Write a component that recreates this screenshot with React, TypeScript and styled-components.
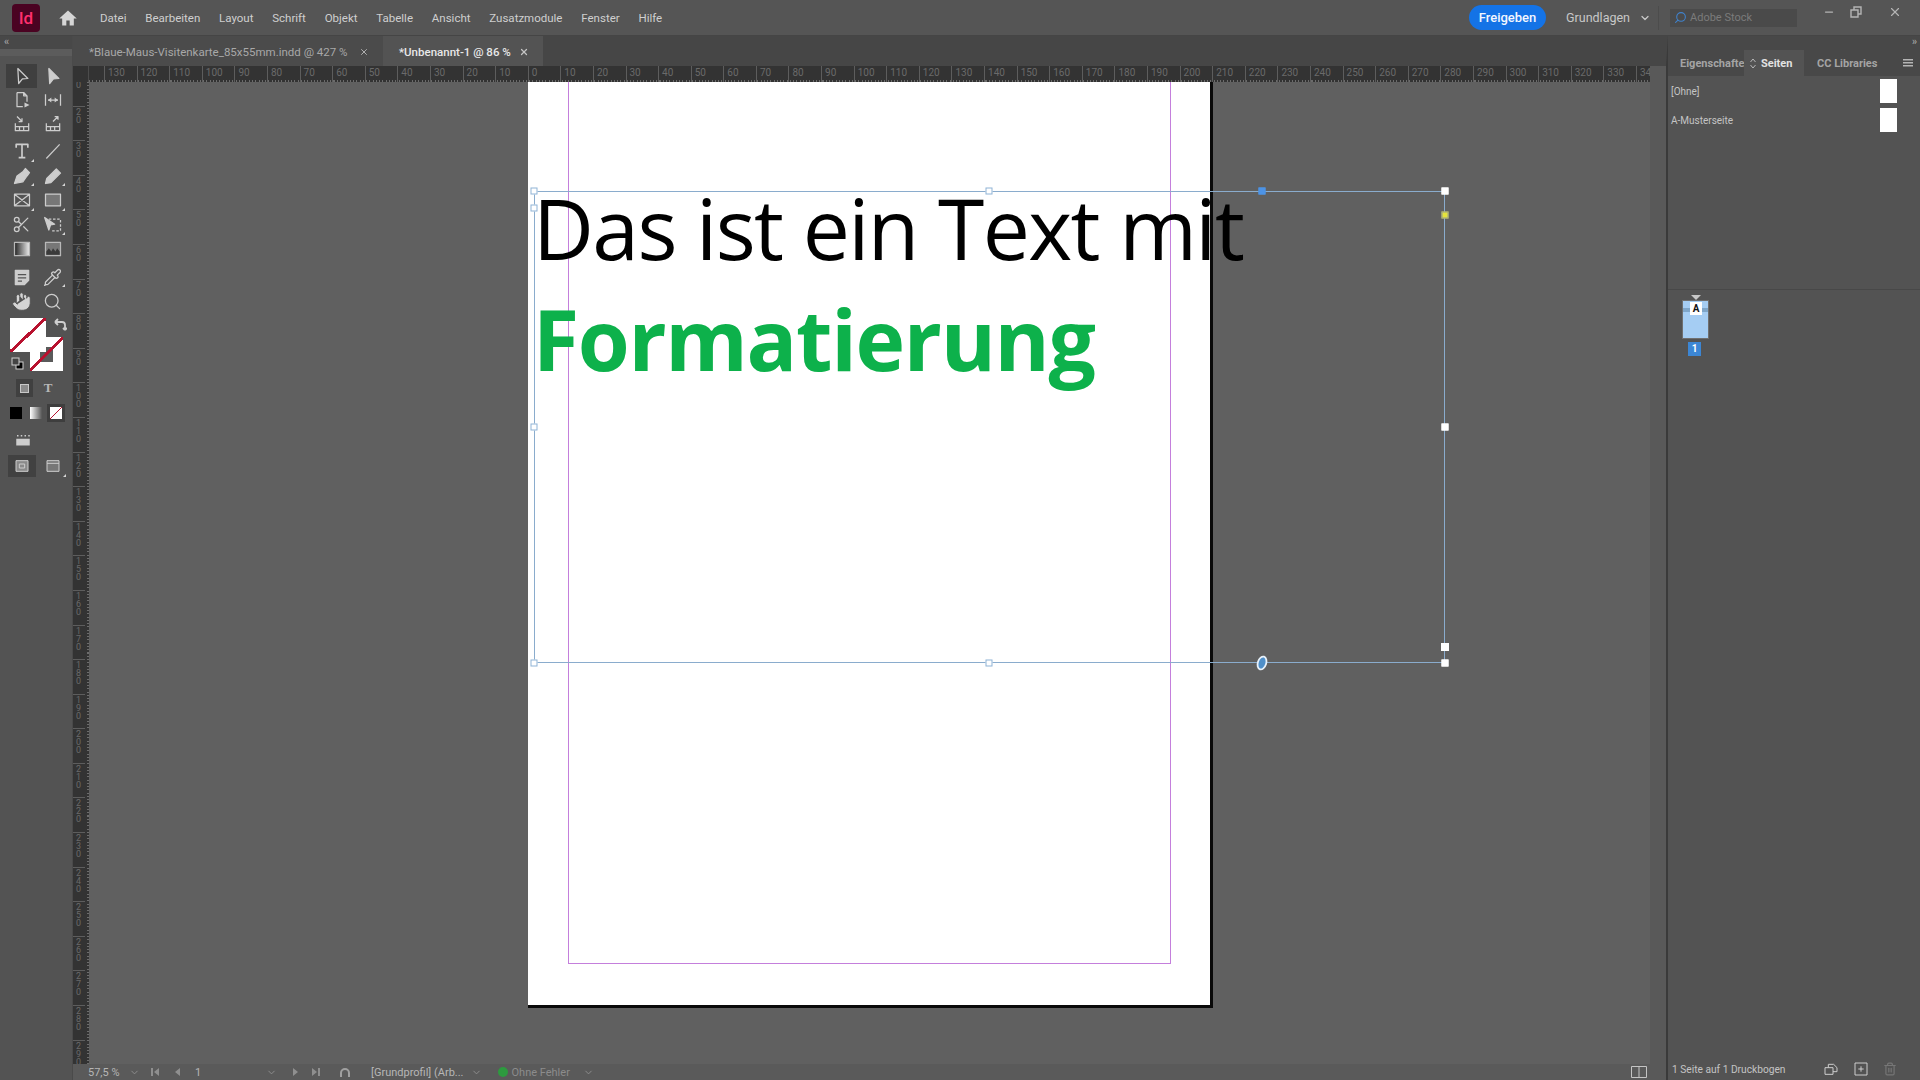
import React from "react";
import styled, { createGlobalStyle } from "styled-components";
import { ChevronDown, Hand, Minus, Pipette, Scissors, Search, Trash2, X } from "lucide-react";

const GlobalStyle = createGlobalStyle`
  html, body { margin: 0; padding: 0; background: #535353; }
  * { box-sizing: border-box; }
`;

const Shell = styled.div`
  width: 1920px;
  height: 1080px;
  display: flex;
  flex-direction: column;
  overflow: hidden;
  background: #535353;
  color: #c8c8c8;
  font-family: Roboto, "Liberation Sans", sans-serif;
  font-size: 12px;
`;

/* top bar */
const TopBar = styled.header`
  height: 36px;
  flex: none;
  display: flex;
  align-items: center;
  background: #555555;
  border-bottom: 1px solid #454545;
`;

const Logo = styled.div`
  width: 28px;
  height: 28px;
  margin-left: 12px;
  border-radius: 4px;
  background: #4a0322;
  color: #ff2f6e;
  font-size: 17px;
  font-weight: 500;
  display: flex;
  align-items: center;
  justify-content: center;
`;

const HomeIcon = styled.svg`
  width: 20px;
  height: 20px;
  margin-left: 18px;
  fill: #d6d6d6;
`;

const Menu = styled.nav`
  display: flex;
  gap: 18.8px;
  margin-left: 22px;
`;

const MenuItem = styled.span`
  color: #cfcfcf;
  font-size: 11.5px;
`;

const TopRight = styled.div`
  margin-left: auto;
  display: flex;
  align-items: center;
  height: 100%;
`;

const ShareButton = styled.div`
  width: 77px;
  height: 25px;
  border-radius: 13px;
  background: #1473e6;
  color: #f2f7ff;
  font-size: 13px;
  font-weight: 500;
  display: flex;
  align-items: center;
  justify-content: center;
`;

const Workspace = styled.div`
  width: 92px;
  margin-left: 20px;
  height: 100%;
  display: flex;
  align-items: center;
  gap: 9px;
  color: #c8c8c8;
  font-size: 12.5px;
  white-space: nowrap;
`;

const TopDivider = styled.i`
  width: 1px;
  height: 24px;
  margin: 0 11px 0 0;
  background: #4c4c4c;
`;

const StockSearch = styled.div`
  width: 127px;
  height: 18px;
  background: #4a4a4a;
  display: flex;
  align-items: center;
  gap: 3px;
  padding-left: 4px;
  color: #7b7b7b;
  font-size: 11px;
`;

const StockIcon = styled(Search)`
  transform: scaleX(-1);
  color: #3f82cc;
`;

const WindowButtons = styled.div`
  width: 123px;
  height: 100%;
  display: flex;
  align-items: flex-start;
  padding: 4px 0 0 26px;
  color: #b4b4b4;
`;

const WindowButton = styled.span<{ $w: number }>`
  width: ${(p) => p.$w}px;
  height: 16px;
  display: flex;
  align-items: center;
`;

const RestoreIcon = styled.svg`
  width: 12px;
  height: 12px;
  fill: none;
  stroke: #b4b4b4;
  stroke-width: 1.4;
`;

/* main area */
const Body = styled.div`
  flex: 1;
  min-height: 0;
  display: flex;
`;

/* tool panel */
const ToolPanel = styled.aside`
  width: 73px;
  flex: none;
  background: #535353;
  display: flex;
  flex-direction: column;
  border-right: 1px solid #4a4a4a;
`;

const PanelCap = styled.div<{ $right?: boolean }>`
  height: ${(p) => (p.$right ? 14 : 13)}px;
  flex: none;
  background: #484848;
  color: #b0b0b0;
  font-size: 10px;
  line-height: 11px;
  padding: 0 4px;
  letter-spacing: -1px;
  text-align: ${(p) => (p.$right ? "right" : "left")};
`;

const Grip = styled.div`
  height: 14px;
  flex: none;
  background: linear-gradient(#5c5c5c 0 7px, transparent 7px);
`;

const ToolGrid = styled.div<{ $row: number; $top: number }>`
  display: grid;
  grid-template-columns: 31px 31px;
  grid-auto-rows: ${(p) => p.$row}px;
  padding-left: 6px;
  margin-top: ${(p) => p.$top}px;
`;

const Tool = styled.div<{ $active?: boolean; $flyout?: boolean }>`
  position: relative;
  display: flex;
  align-items: center;
  justify-content: center;
  color: #cdcdcd;
  background: ${(p) => (p.$active ? "#3f3f3f" : "transparent")};
  ${(p) =>
    p.$flyout
      ? `&::after {
          content: "";
          position: absolute;
          right: 3px;
          bottom: 2px;
          border-left: 3px solid transparent;
          border-bottom: 3px solid #d6d6d6;
        }`
      : ""}
`;

const Glyph = styled.svg`
  width: 20px;
  height: 20px;
  fill: none;
  stroke: #cdcdcd;
  stroke-width: 1.5;
  stroke-linejoin: round;
`;

const SwatchStack = styled.div`
  position: relative;
  height: 60px;
  margin-top: 3px;
  flex: none;
`;

const noneFill = `linear-gradient(to bottom right, transparent 47%, #b8122f 47%, #b8122f 53%, transparent 53%)`;

const FillSwatch = styled.div`
  position: absolute;
  left: 10px;
  top: 2px;
  width: 36px;
  height: 34px;
  z-index: 2;
  background: ${noneFill}, #ffffff;
`;

const StrokeSwatch = styled.div`
  position: absolute;
  left: 30px;
  top: 21px;
  width: 33px;
  height: 34px;
  background: ${noneFill}, linear-gradient(#5a5a5a, #5a5a5a) center / 13px 15px no-repeat, #ffffff;
`;

const SwapIcon = styled.svg`
  position: absolute;
  left: 54px;
  top: 2px;
  width: 13px;
  height: 14px;
  fill: none;
  stroke: #cfcfcf;
  stroke-width: 1.8;
`;

const DefaultsIcon = styled.svg`
  position: absolute;
  left: 11px;
  top: 41px;
  width: 13px;
  height: 13px;
`;

const ModeRow = styled.div<{ $top: number; $left?: number }>`
  display: flex;
  align-items: center;
  height: 18px;
  margin-top: ${(p) => p.$top}px;
  padding-left: ${(p) => p.$left ?? 0}px;
`;

const FormatButton = styled.div<{ $on?: boolean; $w: number }>`
  width: ${(p) => p.$w}px;
  height: 18px;
  display: flex;
  align-items: center;
  justify-content: center;
  background: ${(p) => (p.$on ? "#404040" : "transparent")};
  color: #b8b8b8;
  font-family: "Liberation Serif", serif;
  font-size: 13px;
  font-weight: 700;
`;

const TinySquare = styled.i`
  width: 9px;
  height: 9px;
  background: #8b8b8b;
  border: 1px solid #c8c8c8;
`;

const ColorChip = styled.i<{ $bg: string; $on?: boolean; $first?: boolean }>`
  width: 12px;
  height: 12px;
  margin-left: ${(p) => (p.$first ? 10 : 8)}px;
  background: ${(p) => p.$bg};
  outline: ${(p) => (p.$on ? "3px solid #3e3e3e" : "none")};
`;

const RowIcon = styled(Glyph)`
  width: 18px;
  height: 18px;
`;

const ScreenRow = styled.div`
  display: flex;
  align-items: center;
  height: 22px;
  margin: 5px 0 0 8px;
`;

const ScreenButton = styled.div<{ $on?: boolean; $flyout?: boolean }>`
  position: relative;
  width: 28px;
  height: 22px;
  margin-right: ${(p) => (p.$on ? "3px" : "0")};
  background: ${(p) => (p.$on ? "#414141" : "transparent")};
  display: flex;
  align-items: center;
  justify-content: center;
  ${(p) =>
    p.$flyout
      ? `&::after {
          content: "";
          position: absolute;
          right: 1px;
          bottom: 0;
          border-left: 3px solid transparent;
          border-bottom: 3px solid #d6d6d6;
        }`
      : ""}
`;

const SmallGlyph = styled(Glyph)`
  width: 16px;
  height: 16px;
`;

/* document area */
const Document = styled.main`
  width: 1577px;
  flex: none;
  display: flex;
  flex-direction: column;
`;

const TabStrip = styled.div`
  height: 30px;
  flex: none;
  display: flex;
  background: #464646;
`;

const Tab = styled.div<{ $active?: boolean; $w: number }>`
  width: ${(p) => p.$w}px;
  display: flex;
  align-items: center;
  padding: 2px 0 0 ${(p) => (p.$active ? 16 : 16)}px;
  background: ${(p) => (p.$active ? "#535353" : "#4b4b4b")};
  color: ${(p) => (p.$active ? "#e8e8e8" : "#a8a8a8")};
  font-size: 11.5px;
  font-weight: ${(p) => (p.$active ? 500 : 400)};
  white-space: nowrap;
`;

const TabClose = styled.span`
  display: flex;
  margin-left: auto;
  margin-right: 14px;
  color: #c4c4c4;
`;

const RulerRow = styled.div`
  height: 16px;
  flex: none;
  display: flex;
  background: #333333;
`;

const RulerCorner = styled.div`
  width: 16px;
  flex: none;
  border-right: 1px solid #4c4c4c;
`;

const HorizontalRuler = styled.div`
  flex: 1;
  min-width: 0;
  display: flex;
  overflow: hidden;
  padding-left: 15px;
  background: repeating-linear-gradient(90deg, #6c6c6c 0 1px, transparent 1px 3.26px) left bottom / 100% 2px no-repeat;
`;

const RulerTick = styled.span`
  width: 32.6px;
  flex: none;
  padding: 1px 0 0 3px;
  border-left: 1px solid #5d5d5d;
  color: #6a6a6a;
  font-size: 10px;
  line-height: 11px;
`;

const CanvasRow = styled.div`
  flex: 1;
  min-height: 0;
  display: flex;
`;

const VerticalRuler = styled.div`
  width: 16px;
  flex: none;
  overflow: hidden;
  background: #333333 repeating-linear-gradient(180deg, #6c6c6c 0 1px, transparent 1px 3.26px) right top / 2px 100% no-repeat;
`;

const VerticalTicks = styled.div`
  margin-top: -11px;
`;

const VerticalTick = styled.span`
  display: block;
  height: 32.6px;
  padding: 1px 0 0 3px;
  border-top: 1px solid #5d5d5d;
  color: #6a6a6a;
  font-size: 9px;
  line-height: 8px;
  width: 9px;
  white-space: normal;
  word-break: break-all;
  box-sizing: content-box;
`;

const Canvas = styled.div`
  flex: 1;
  min-width: 0;
  position: relative;
  background: #606060;
  padding-left: 439px;
`;

const Page = styled.div`
  position: relative;
  width: 685px;
  height: 926px;
  background: #ffffff;
  border-right: 3px solid #0a0a0a;
  border-bottom: 3px solid #0a0a0a;
`;

const MarginGuide = styled.div`
  position: absolute;
  left: 40px;
  top: 0;
  width: 603px;
  height: 882px;
  border: 1px solid #c47fdc;
  border-top: 0;
`;

const TextFrame = styled.div`
  position: absolute;
  left: 6px;
  top: 109px;
  width: 911px;
  height: 472px;
  border: 1px solid #8aaccd;
  font-family: "Open Sans", "Noto Sans", sans-serif;
  z-index: 2;
`;

const HeadLine = styled.div`
  height: 111px;
  margin: -8px 0 0 -2px;
  color: #000000;
  font-size: 84px;
  line-height: 88px;
  letter-spacing: -1.6px;
  white-space: nowrap;
`;

const GreenLine = styled.div`
  margin-left: -2px;
  color: #0db14b;
  font-size: 84px;
  line-height: 88px;
  font-weight: 700;
  letter-spacing: -1.3px;
  white-space: nowrap;
`;

const Handle = styled.i<{ $x: number; $y: number; $size?: number; $bg?: string; $line?: string }>`
  position: absolute;
  z-index: 3;
  left: ${(p) => p.$x}px;
  top: ${(p) => p.$y}px;
  width: ${(p) => p.$size ?? 7}px;
  height: ${(p) => p.$size ?? 7}px;
  transform: translate(-50%, -50%);
  background: ${(p) => p.$bg ?? "#ffffff"};
  border: 1px solid ${(p) => p.$line ?? "#8fb3d6"};
`;

const ThreadMark = styled.svg`
  position: absolute;
  z-index: 3;
  left: 734px;
  top: 581px;
  width: 14px;
  height: 16px;
  transform: translate(-50%, -50%);
`;

const StatusBar = styled.footer`
  height: 16px;
  flex: none;
  display: flex;
  align-items: center;
  background: #5a5a5a;
  color: #b0b0b0;
  font-size: 11px;
`;

const StatusText = styled.span<{ $w: number; $pad?: number; $dim?: boolean }>`
  flex: none;
  width: ${(p) => p.$w}px;
  padding-left: ${(p) => p.$pad ?? 0}px;
  color: ${(p) => (p.$dim ? "#8c8c8c" : "#b6b6b6")};
  white-space: nowrap;
  overflow: hidden;
  display: flex;
  align-items: center;
`;

const NavGlyph = styled.svg<{ $w: number }>`
  flex: none;
  width: ${(p) => p.$w}px;
  height: 10px;
  fill: #8f8f8f;
`;

const GreenDot = styled.i`
  width: 10px;
  height: 10px;
  border-radius: 50%;
  margin-right: 4px;
  flex: none;
  background: #2d9a3f;
`;

const LayoutToggle = styled.svg`
  margin-left: auto;
  margin-right: 3px;
  width: 16px;
  height: 12px;
  fill: none;
  stroke: #c4c4c4;
`;

const ScrollStrip = styled.div`
  width: 18px;
  flex: none;
  background: #595959;
  border-top: 30px solid #464646;
  border-right: 2px solid #3a3a3a;
`;

/* right panel */
const SidePanel = styled.aside`
  flex: 1;
  min-width: 0;
  display: flex;
  flex-direction: column;
  background: #535353;
`;

const PanelTabs = styled.div`
  height: 26px;
  flex: none;
  display: flex;
  align-items: center;
  background: #484848;
  padding-left: 12px;
  font-size: 11px;
  font-weight: 700;
  color: #a4a4a4;
`;

const PanelTab = styled.div<{ $active?: boolean; $w: number; $pad?: number }>`
  width: ${(p) => p.$w}px;
  height: 100%;
  flex: none;
  display: flex;
  align-items: center;
  gap: 5px;
  overflow: hidden;
  white-space: nowrap;
  padding-left: ${(p) => p.$pad ?? 0}px;
  background: ${(p) => (p.$active ? "#535353" : "transparent")};
  color: ${(p) => (p.$active ? "#e2e2e2" : "#a4a4a4")};
`;

const SortIcon = styled.svg`
  width: 6px;
  height: 11px;
  flex: none;
  fill: none;
  stroke: #b8b8b8;
`;

const BurgerIcon = styled.svg`
  margin-left: auto;
  margin-right: 7px;
  width: 10px;
  height: 8px;
  fill: #b4b4b4;
`;

const MasterList = styled.div`
  height: 214px;
  flex: none;
  padding: 3px 23px 0 3px;
  border-bottom: 1px solid #484848;
  display: flex;
  flex-direction: column;
  gap: 5px;
`;

const MasterRow = styled.div`
  height: 24px;
  display: flex;
  align-items: center;
  justify-content: space-between;
  color: #c4c4c4;
  font-size: 10px;
`;

const MasterThumb = styled.i`
  width: 17px;
  height: 24px;
  background: #ffffff;
`;

const PageList = styled.div`
  padding: 5px 0 0 15px;
  display: flex;
  flex-direction: column;
`;

const MasterCaret = styled.i`
  width: 0;
  height: 0;
  margin-left: 8px;
  border-left: 5px solid transparent;
  border-right: 5px solid transparent;
  border-top: 5px solid #c8c8c8;
`;

const PageThumb = styled.div`
  position: relative;
  width: 25px;
  height: 37px;
  margin-top: 1px;
  background: linear-gradient(transparent 7px, #7fa6c9 7px, #7fa6c9 11px, transparent 11px), #a5cdf3;
  outline: 1px solid #6f6f6f;
`;

const MasterTag = styled.span`
  position: absolute;
  left: 7px;
  top: 1px;
  width: 12px;
  height: 13px;
  background: #ffffff;
  color: #111111;
  font-size: 10px;
  font-weight: 700;
  line-height: 13px;
  text-align: center;
`;

const PageBadge = styled.div`
  width: 13px;
  height: 14px;
  margin: 4px 0 0 5px;
  background: #3c86d4;
  color: #ffffff;
  font-size: 10px;
  font-weight: 700;
  line-height: 14px;
  text-align: center;
`;

const PanelFooter = styled.div`
  margin-top: auto;
  height: 22px;
  flex: none;
  display: flex;
  align-items: center;
  padding-left: 4px;
  color: #c4c4c4;
  font-size: 10.2px;
`;

const FooterIcons = styled.div`
  margin-left: auto;
  margin-right: 23px;
  display: flex;
  align-items: center;
  gap: 14px;
`;

const menus = ["Datei", "Bearbeiten", "Layout", "Schrift", "Objekt", "Tabelle", "Ansicht", "Zusatzmodule", "Fenster", "Hilfe"];

const hTicks = Array.from({ length: 48 }, (_, i) => Math.abs(-130 + i * 10));
const vTicks = Array.from({ length: 30 }, (_, i) => (i + 1) * 10);

const Tools = {
  select: <Glyph viewBox="0 0 24 24"><path d="M7 3l12 12-6.5 0.5L8 21z" /></Glyph>,
  direct: <Glyph viewBox="0 0 24 24"><path d="M7 3l12 12-6.5 0.5L8 21z" fill="#cdcdcd" /></Glyph>,
  page: <Glyph viewBox="0 0 24 24"><path d="M6 3h8l4 4v7M6 3v17h7M14 3v4h4" /><path d="M15 15l6 3-6 3z" fill="#cdcdcd" stroke="none" /></Glyph>,
  gap: <Glyph viewBox="0 0 24 24"><path d="M3 5v14M21 5v14M6 12h12" /><path d="M6 12l4-3v6zM18 12l-4-3v6z" fill="#cdcdcd" stroke="none" /></Glyph>,
  collect: <Glyph viewBox="0 0 24 24"><path d="M4 11v9h16v-9M4 15h16M9 15v5M14 15v5" /><path d="M6 3l6 6M8 9h4V5" /></Glyph>,
  place: <Glyph viewBox="0 0 24 24"><path d="M4 11v9h16v-9M4 15h16M9 15v5M14 15v5" /><path d="M12 9l6-6M14 3h4v4" /></Glyph>,
  type: <Glyph viewBox="0 0 24 24"><path d="M5 8V4h14v4M12 4v16M8 20h8" strokeWidth="2" /></Glyph>,
  line: <Glyph viewBox="0 0 24 24"><path d="M4 21L20 4" /></Glyph>,
  pen: <Glyph viewBox="0 0 24 24"><path d="M3 21l3-9 7-5 5 5-5 7zM3 21l6-6M13 7l3-4 5 5-3 4" fill="#cdcdcd" /></Glyph>,
  pencil: <Glyph viewBox="0 0 24 24"><path d="M3 21l1.500-6L16 3.500l5 5L9.500 20z" fill="#cdcdcd" /></Glyph>,
  frame: <Glyph viewBox="0 0 24 24"><path d="M3 5h18v14H3zM3 5l18 14M21 5L3 19" /></Glyph>,
  rect: <Glyph viewBox="0 0 24 24"><path d="M3 5h18v14H3z" fill="#777777" /></Glyph>,
  transform: <Glyph viewBox="0 0 24 24"><path d="M7 5h14v14H11" strokeDasharray="3 2" /><path d="M2 3l12 8-5 1-2 6z" fill="#cdcdcd" /></Glyph>,
  gradient: (
    <Glyph viewBox="0 0 24 24">
      <defs>
        <linearGradient id="gradTool">
          <stop offset="0" stopColor="#222222" />
          <stop offset="1" stopColor="#eeeeee" />
        </linearGradient>
      </defs>
      <path d="M3 4h18v16H3z" fill="url(#gradTool)" stroke="#b8b8b8" />
    </Glyph>
  ),
  feather: (
    <Glyph viewBox="0 0 24 24">
      <path d="M3 4h18v16H3z" fill="#777777" stroke="#b8b8b8" />
      <path d="M4 15l3-4 3 4 2-4 3 4 2-4 3 4v4H4z" fill="#3a3a3a" stroke="none" />
    </Glyph>
  ),
  note: <Glyph viewBox="0 0 24 24"><path d="M4 4h16v12l-5 5H4z" fill="#cdcdcd" /><path d="M7 9h10M7 13h10M7 17h5" stroke="#555555" /></Glyph>,
};

function ToolCell({ children, active, flyout }: { children: React.ReactNode; active?: boolean; flyout?: boolean }) {
  return (
    <Tool $active={active} $flyout={flyout}>
      {children}
    </Tool>
  );
}

function ToolColumn() {
  return (
    <ToolPanel>
      <PanelCap>‹‹</PanelCap>
      <Grip />
      <ToolGrid $row={24} $top={1}>
        <ToolCell active>{Tools.select}</ToolCell>
        <ToolCell>{Tools.direct}</ToolCell>
        <ToolCell>{Tools.page}</ToolCell>
        <ToolCell>{Tools.gap}</ToolCell>
        <ToolCell>{Tools.collect}</ToolCell>
        <ToolCell>{Tools.place}</ToolCell>
      </ToolGrid>
      <ToolGrid $row={24.5} $top={3}>
        <ToolCell flyout>{Tools.type}</ToolCell>
        <ToolCell>{Tools.line}</ToolCell>
        <ToolCell flyout>{Tools.pen}</ToolCell>
        <ToolCell flyout>{Tools.pencil}</ToolCell>
        <ToolCell flyout>{Tools.frame}</ToolCell>
        <ToolCell flyout>{Tools.rect}</ToolCell>
        <ToolCell><Scissors size={19} strokeWidth={1.6} /></ToolCell>
        <ToolCell flyout>{Tools.transform}</ToolCell>
        <ToolCell>{Tools.gradient}</ToolCell>
        <ToolCell>{Tools.feather}</ToolCell>
      </ToolGrid>
      <ToolGrid $row={24} $top={3.5}>
        <ToolCell>{Tools.note}</ToolCell>
        <ToolCell flyout><Pipette size={19} strokeWidth={1.6} /></ToolCell>
        <ToolCell><Hand size={21} strokeWidth={1.1} fill="#d4d4d4" color="#535353" /></ToolCell>
        <ToolCell><Search size={19} strokeWidth={1.6} /></ToolCell>
      </ToolGrid>
      <SwatchStack>
        <FillSwatch />
        <StrokeSwatch />
        <SwapIcon viewBox="0 0 13 14"><path d="M2 4h6a3 3 0 0 1 3 3v5M1 4l3-3M1 4l3 3M11 12l-2-2M11 12l2-2" /></SwapIcon>
        <DefaultsIcon viewBox="0 0 13 13">
          <rect x="5" y="5" width="7" height="7" fill="#000000" stroke="#d0d0d0" />
          <rect x="1" y="1" width="7" height="7" fill="#444444" stroke="#d0d0d0" />
        </DefaultsIcon>
      </SwatchStack>
      <ModeRow $top={3} $left={16}>
        <FormatButton $on $w={17}><TinySquare /></FormatButton>
        <FormatButton $w={30}>T</FormatButton>
      </ModeRow>
      <ModeRow $top={7}>
        <ColorChip $first $bg="#000000" />
        <ColorChip $bg="linear-gradient(90deg,#ffffff,#555555)" />
        <ColorChip $on $bg={`${noneFill}, #ffffff`} />
      </ModeRow>
      <ModeRow $top={10} $left={14}>
        <RowIcon viewBox="0 0 24 24">
          <path d="M3 9h18v9H3z" fill="#cdcdcd" stroke="none" />
          <path d="M4 5h2M9 5h2M14 5h2M19 5h2" strokeWidth="2" />
        </RowIcon>
      </ModeRow>
      <ScreenRow>
        <ScreenButton $on>
          <SmallGlyph viewBox="0 0 24 24"><path d="M3 4h18v16H3zM8 9h8v6H8z" fill="#8a8a8a" /></SmallGlyph>
        </ScreenButton>
        <ScreenButton $flyout>
          <SmallGlyph viewBox="0 0 24 24"><path d="M3 4h18v16H3zM3 8h18" fill="#777777" /></SmallGlyph>
        </ScreenButton>
      </ScreenRow>
    </ToolPanel>
  );
}

function DocumentPage() {
  return (
    <Page>
      <MarginGuide />
      <TextFrame>
        <HeadLine>Das ist ein Text mit</HeadLine>
        <GreenLine>Formatierung</GreenLine>
      </TextFrame>
      <Handle $x={6} $y={109} />
      <Handle $x={461} $y={109} />
      <Handle $x={6} $y={126} />
      <Handle $x={6} $y={345} />
      <Handle $x={6} $y={581} />
      <Handle $x={461} $y={581} />
      <Handle $x={734} $y={109} $bg="#4d93e6" $line="#4d93e6" />
      <Handle $x={917} $y={109} $line="#ffffff" />
      <Handle $x={917} $y={133} $bg="#e4e33c" $line="#9aa08c" />
      <Handle $x={917} $y={345} $line="#ffffff" />
      <Handle $x={917} $y={565} $size={8} $line="#ffffff" />
      <Handle $x={917} $y={581} $line="#ffffff" />
      <ThreadMark viewBox="0 0 14 16">
        <ellipse cx="7" cy="8" rx="4.2" ry="6.6" transform="rotate(18 7 8)" fill="#4f8fc9" stroke="#e8f1fa" strokeWidth="1.8" />
      </ThreadMark>
    </Page>
  );
}

function StatusLine() {
  return (
    <StatusBar>
      <StatusText $w={56} $pad={15}>57,5 %</StatusText>
      <ChevronDown size={11} color="#8f8f8f" />
      <NavGlyph $w={30} viewBox="0 0 30 10"><path d="M11 1h2v8h-2zM14 5l5-4v8z" /></NavGlyph>
      <NavGlyph $w={14} viewBox="0 0 14 10"><path d="M5 5l5-4v8z" /></NavGlyph>
      <StatusText $w={82} $pad={11}>1</StatusText>
      <ChevronDown size={11} color="#8f8f8f" />
      <NavGlyph $w={30} viewBox="0 0 30 10"><path d="M16 1l5 4-5 4z" /></NavGlyph>
      <NavGlyph $w={20} viewBox="0 0 20 10"><path d="M5 1l5 4-5 4zM11 1h2v8h-2z" /></NavGlyph>
      <NavGlyph $w={36} viewBox="0 0 36 10"><path d="M14 10V6a4 4 0 0 1 8 0v4" fill="none" stroke="#a0a0a0" strokeWidth="2" /></NavGlyph>
      <StatusText $w={107.5} $pad={8}>[Grundprofil] (Arb...</StatusText>
      <ChevronDown size={11} color="#8f8f8f" />
      <StatusText $w={101} $pad={16} $dim>
        <GreenDot />
        Ohne Fehler
      </StatusText>
      <ChevronDown size={11} color="#8f8f8f" />
      <LayoutToggle viewBox="0 0 16 12"><path d="M.5.500h15v11H.5zM8 .500v11" /></LayoutToggle>
    </StatusBar>
  );
}

export default function App() {
  return (
    <Shell>
      <GlobalStyle />
      <TopBar>
        <Logo>Id</Logo>
        <HomeIcon viewBox="0 0 24 24"><path d="M12 3L1.500 12.500H5V21h5v-6h4v6h5v-8.500h3.500z" /></HomeIcon>
        <Menu>
          {menus.map((m) => (
            <MenuItem key={m}>{m}</MenuItem>
          ))}
        </Menu>
        <TopRight>
          <ShareButton>Freigeben</ShareButton>
          <Workspace>
            Grundlagen
            <ChevronDown size={12} strokeWidth={2.5} />
          </Workspace>
          <TopDivider />
          <StockSearch>
            <StockIcon size={13} />
            Adobe Stock
          </StockSearch>
          <WindowButtons>
            <WindowButton $w={27}><Minus size={12} strokeWidth={2.5} /></WindowButton>
            <WindowButton $w={38}>
              <RestoreIcon viewBox="0 0 12 12"><path d="M1 4h7v7H1zM4 4V1h7v7H8" /></RestoreIcon>
            </WindowButton>
            <WindowButton $w={14}><X size={14} /></WindowButton>
          </WindowButtons>
        </TopRight>
      </TopBar>
      <Body>
        <ToolColumn />
        <Document>
          <TabStrip>
            <Tab $w={310}>
              *Blaue-Maus-Visitenkarte_85x55mm.indd @ 427 %
              <TabClose><X size={10} /></TabClose>
            </Tab>
            <Tab $active $w={160}>
              *Unbenannt-1 @ 86 %
              <TabClose><X size={10} strokeWidth={3} /></TabClose>
            </Tab>
          </TabStrip>
          <RulerRow>
            <RulerCorner />
            <HorizontalRuler>
              {hTicks.map((t, i) => (
                <RulerTick key={i}>{t}</RulerTick>
              ))}
            </HorizontalRuler>
          </RulerRow>
          <CanvasRow>
            <VerticalRuler>
              <VerticalTicks>
                {vTicks.map((t) => (
                  <VerticalTick key={t}>{t}</VerticalTick>
                ))}
              </VerticalTicks>
            </VerticalRuler>
            <Canvas>
              <DocumentPage />
            </Canvas>
          </CanvasRow>
          <StatusLine />
        </Document>
        <ScrollStrip />
        <SidePanel>
          <PanelCap $right>››</PanelCap>
          <PanelTabs>
            <PanelTab $w={64}>Eigenschaften</PanelTab>
            <PanelTab $active $w={60} $pad={6}>
              <SortIcon viewBox="0 0 6 11"><path d="M.5 4L3 1l2.500 3M.5 7L3 10l2.500-3" /></SortIcon>
              Seiten
            </PanelTab>
            <PanelTab $w={90} $pad={13}>CC Libraries</PanelTab>
            <BurgerIcon viewBox="0 0 10 8"><path d="M0 0h10v1.500H0zM0 3h10v1.500H0zM0 6h10v1.500H0z" /></BurgerIcon>
          </PanelTabs>
          <MasterList>
            <MasterRow>[Ohne]<MasterThumb /></MasterRow>
            <MasterRow>A-Musterseite<MasterThumb /></MasterRow>
          </MasterList>
          <PageList>
            <MasterCaret />
            <PageThumb><MasterTag>A</MasterTag></PageThumb>
            <PageBadge>1</PageBadge>
          </PageList>
          <PanelFooter>
            1 Seite auf 1 Druckbogen
            <FooterIcons>
              <SmallGlyph viewBox="0 0 24 24"><path d="M3 10h12v10H3zM8 10V5h8l5 5v6h-6" /></SmallGlyph>
              <SmallGlyph viewBox="0 0 24 24"><path d="M3 3h18v18H3zM12 8v8M8 12h8" /></SmallGlyph>
              <Trash2 size={14} color="#777777" />
            </FooterIcons>
          </PanelFooter>
        </SidePanel>
      </Body>
    </Shell>
  );
}
